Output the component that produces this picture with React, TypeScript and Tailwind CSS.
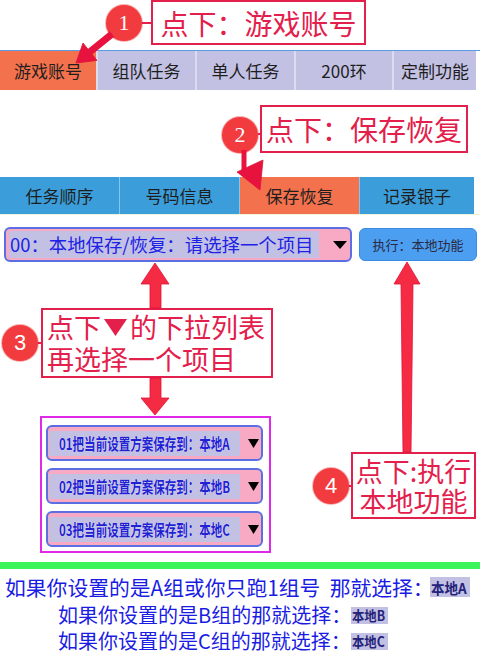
import React from "react";

const CJK = { fontFamily: '"Noto Sans CJK SC", "Noto Sans", sans-serif' };

function Badge({ n, serif }: { n: string; serif?: boolean }) {
  return (
    <div
      className="w-[36px] h-[36px] shrink-0 rounded-full bg-[#f13b3f] ring-1 ring-[#f9b4b4] flex items-center justify-center text-white text-[22px] leading-none"
      style={serif ? { fontFamily: '"Liberation Serif", serif' } : { fontFamily: '"Liberation Sans", sans-serif' }}
    >
      {n}
    </div>
  );
}

function Tri({ w, h }: { w: number; h: number }) {
  return (
    <svg width={w} height={h} viewBox={`0 0 ${w} ${h}`} className="shrink-0">
      <polygon points={`0,0 ${w},0 ${w / 2},${h}`} fill="#000" />
    </svg>
  );
}

function ListItem({ label }: { label: string }) {
  return (
    <div className="w-[217px] h-[36px] shrink-0 rounded-[6px] border-2 border-[#5b6fe2] bg-[#f8a9c3] flex items-center">
      <div className="ml-[1px] w-[191px] h-[25px] bg-[#c3c1e3] flex items-center pl-[10px] overflow-hidden">
        <span className="inline-block whitespace-nowrap origin-left scale-x-[0.72] text-[16px] font-bold text-[#1f22d2] leading-none [text-shadow:0_0_1px_#fff]">
          {label}
        </span>
      </div>
      <div className="ml-auto mr-[2px]">
        <Tri w={11} h={9} />
      </div>
    </div>
  );
}

function Tag({ text, big }: { text: string; big?: boolean }) {
  return (
    <span
      className={
        big
          ? "inline-flex items-center w-[40px] h-[20px] bg-[#c3c1e3] pl-[1px] overflow-hidden"
          : "inline-flex items-center w-[37px] h-[17px] bg-[#c3c1e3] pl-[1px] overflow-hidden"
      }
    >
      <span
        className={
          (big ? "text-[15px] scale-x-[0.9] " : "text-[14px] scale-x-[0.88] ") +
          "inline-block whitespace-nowrap origin-left font-bold text-[#23237a] leading-none"
        }
      >
        {text}
      </span>
    </span>
  );
}

export default function App() {
  const topTabs = [
    { t: "游戏账号", w: "w-[96px]", on: true },
    { t: "组队任务", w: "w-[99px]" },
    { t: "单人任务", w: "w-[99px]" },
    { t: "200环", w: "w-[98px]" },
    { t: "定制功能", w: "w-[84px]" },
  ];
  const subTabs = [
    { t: "任务顺序", w: "w-[119px]" },
    { t: "号码信息", w: "w-[120px]" },
    { t: "保存恢复", w: "w-[120px]", on: true },
    { t: "记录银子", w: "w-[115px]" },
  ];

  return (
    <div className="relative w-[480px] h-[655px] bg-white overflow-hidden" style={CJK}>
      {/* callout 1 */}
      <div className="h-[50px] pl-[106px] flex">
        <div className="h-[45px] flex items-center">
          <Badge n="1" serif />
          <div className="w-[9px] h-[2px] bg-[#e3204b]" />
          <div className="w-[215px] h-[45px] border-2 border-[#e3204b] bg-white flex items-center justify-center text-[28px] text-[#e3204b] leading-none">
            点下：游戏账号
          </div>
        </div>
      </div>

      {/* top tabs */}
      <div className="h-[40px] border-t border-[#5a9ae6] flex">
        {topTabs.map((tab, i) => (
          <div
            key={tab.t}
            className={
              (tab.on ? "bg-[#f3714d] " : "bg-[#c3c1e3] ") +
              (i > 0 ? "border-l-2 border-[#dddcef] " : "") +
              tab.w +
              " h-full flex items-center justify-center text-[17px] text-[#1e1e1e]"
            }
          >
            {tab.t}
          </div>
        ))}
      </div>

      {/* callout 2 */}
      <div className="h-[87px] pl-[222px] pt-[15px] flex">
        <div className="mt-[12px]">
          <Badge n="2" serif />
        </div>
        <div className="mt-[28px] w-[2px] h-[2px] bg-[#e3204b]" />
        <div className="w-[208px] h-[48px] border-2 border-[#e3204b] bg-white flex items-center justify-center text-[28px] text-[#e3204b] leading-none">
          点下：保存恢复
        </div>
      </div>

      {/* sub tabs */}
      <div className="h-[38px] border-b border-[#eef2d8] flex">
        {subTabs.map((tab, i) => (
          <div
            key={tab.t}
            className={
              (tab.on ? "bg-[#f3714d] " : "bg-[#3b9edb] ") +
              (i > 0 ? "border-l border-[#86c6ee] " : "") +
              tab.w +
              " h-[37px] flex items-center justify-center text-[17px] text-[#1e1e1e]"
            }
          >
            {tab.t}
          </div>
        ))}
      </div>

      {/* dropdown row */}
      <div className="mt-[12px] pl-[4px] flex items-center">
        <div className="w-[348px] h-[35px] rounded-[6px] border-2 border-[#5b6fe2] bg-[#f8a9c3] flex items-center">
          <div className="ml-[3px] w-[310px] h-[27px] bg-[#c3c1e3] flex items-center pl-[1px] text-[18.4px] text-[#1c22e6] leading-none whitespace-nowrap overflow-hidden">
            00：本地保存/恢复：请选择一个项目
          </div>
          <div className="ml-[14px]">
            <Tri w={14} h={8} />
          </div>
        </div>
        <div className="ml-[7px] w-[118px] h-[33px] rounded-[6px] border border-[#3b8be0] bg-[#4c9ef0] flex items-center justify-center text-[13px] text-[#2a2a44]">
          执行：本地功能
        </div>
      </div>

      {/* middle */}
      <div className="h-[291px] flex">
        <div className="w-[300px] flex flex-col">
          <div className="mt-[46px] h-[70px] flex items-center">
            <div className="ml-[2px]">
              <Badge n="3" />
            </div>
            <div className="w-[3px] h-[2px] bg-[#e3204b]" />
            <div className="w-[232px] h-[70px] border-2 border-[#e3204b] bg-white flex flex-col justify-center pl-[4px] text-[27px] text-[#e3204b] leading-[32px]">
              <div className="flex items-center whitespace-nowrap">
                点下
                <svg width="27" height="20" viewBox="0 0 27 20" className="mx-[1px]">
                  <polygon points="2,2 25,2 13.5,19" fill="#e3204b" />
                </svg>
                的下拉列表
              </div>
              <div className="whitespace-nowrap">再选择一个项目</div>
            </div>
          </div>
          <div className="mt-[38px] ml-[40px] w-[231px] h-[137px] border-2 border-[#e028e8] pt-[7px] pl-[4px] flex flex-col gap-[7px]">
            <ListItem label="01把当前设置方案保存到：本地A" />
            <ListItem label="02把当前设置方案保存到：本地B" />
            <ListItem label="03把当前设置方案保存到：本地C" />
          </div>
        </div>
        <div className="flex-1 pt-[190px] pl-[13px]">
          <div className="flex items-center">
            <Badge n="4" />
            <div className="w-[2px] h-[2px] bg-[#e3204b]" />
            <div className="w-[125px] h-[67px] border-2 border-[#e3204b] bg-white flex flex-col items-center justify-center text-[27px] text-[#e3204b] leading-[30px]">
              <div className="whitespace-nowrap">点下:执行</div>
              <div className="whitespace-nowrap">本地功能</div>
            </div>
          </div>
        </div>
      </div>

      {/* green bar */}
      <div className="mt-[9px] h-[7px] bg-[#3cf55a]" />

      {/* notes */}
      <div className="text-[#1a1ce4]">
        <div className="mt-[6px] h-[24px] pl-[5px] flex items-center whitespace-nowrap">
          <div className="w-[425px] text-[20.8px] leading-[24px]">如果你设置的是A组或你只跑1组号&nbsp;&nbsp;那就选择：</div>
          <Tag text="本地A" big />
        </div>
        <div className="mt-[4px] h-[24px] pl-[58px] flex items-center whitespace-nowrap">
          <div className="text-[20px] leading-[24px]">如果你设置的是B组的那就选择：</div>
          <Tag text="本地B" />
        </div>
        <div className="mt-[2px] h-[24px] pl-[58px] flex items-center whitespace-nowrap">
          <div className="text-[20px] leading-[24px]">如果你设置的是C组的那就选择：</div>
          <Tag text="本地C" />
        </div>
      </div>

      {/* arrows */}
      <svg className="absolute top-0 left-0 pointer-events-none" width="480" height="655" viewBox="0 0 480 655">
        <g fill="#f52a43" stroke="#e01237" strokeWidth="0.8">
          <line x1="112" y1="34" x2="90" y2="51.8" stroke="#e8123e" strokeWidth="7" />
          <polygon points="76,63 97,60.4 83,43" fill="#e8123e" />
          <line x1="244" y1="150" x2="244" y2="170" stroke="#e8123e" strokeWidth="5" />
          <polygon points="237,172 263,160 260,190" fill="#e8123e" />
          <polygon points="155,263 169,284 161,284 161,308 150,308 150,284 141,284" />
          <polygon points="150,378 161,378 161,398 169,398 155,415 141,398 150,398" />
          <polygon points="407,262 420,284 413,284 411,452 403,452 401,284 394,284" />
        </g>
      </svg>
    </div>
  );
}
